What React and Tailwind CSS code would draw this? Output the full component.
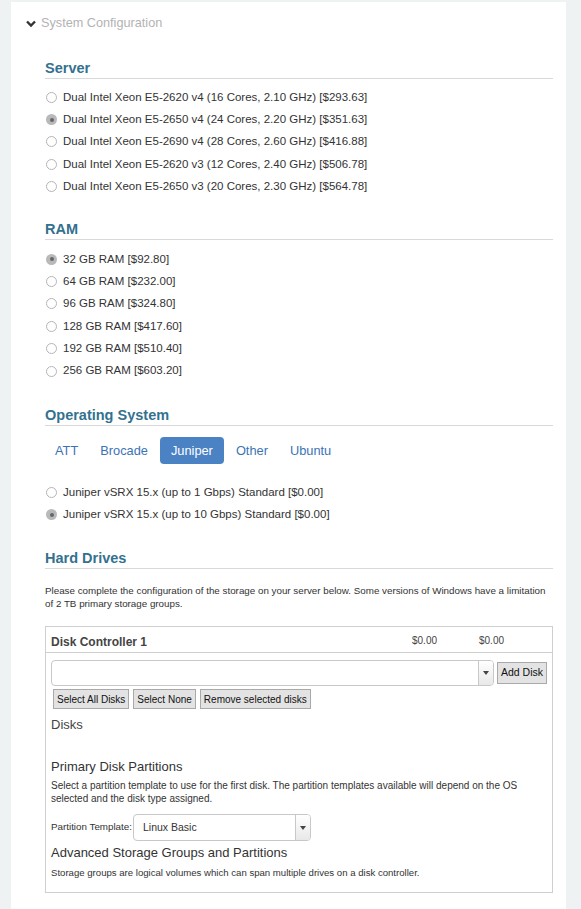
import { useState } from "react";

const servers = [
  "Dual Intel Xeon E5-2620 v4 (16 Cores, 2.10 GHz) [$293.63]",
  "Dual Intel Xeon E5-2650 v4 (24 Cores, 2.20 GHz) [$351.63]",
  "Dual Intel Xeon E5-2690 v4 (28 Cores, 2.60 GHz) [$416.88]",
  "Dual Intel Xeon E5-2620 v3 (12 Cores, 2.40 GHz) [$506.78]",
  "Dual Intel Xeon E5-2650 v3 (20 Cores, 2.30 GHz) [$564.78]",
];

const rams = [
  "32 GB RAM [$92.80]",
  "64 GB RAM [$232.00]",
  "96 GB RAM [$324.80]",
  "128 GB RAM [$417.60]",
  "192 GB RAM [$510.40]",
  "256 GB RAM [$603.20]",
];

const osTabs = ["ATT", "Brocade", "Juniper", "Other", "Ubuntu"];

const osOptions = [
  "Juniper vSRX 15.x (up to 1 Gbps) Standard [$0.00]",
  "Juniper vSRX 15.x (up to 10 Gbps) Standard [$0.00]",
];

export default function App() {
  const [server, setServer] = useState(1);
  const [ram, setRam] = useState(0);
  const [tab, setTab] = useState("Juniper");
  const [os, setOs] = useState(1);

  return (
    <div className="min-h-[909px] bg-[#eef2f3] pt-[2px] pl-[11px] pr-[15px] font-['Liberation_Sans',Arial,sans-serif] text-[#333]">
      <div className="min-h-[907px] bg-white pb-4">
        <div className="flex items-center h-[42px] pl-[15px] pt-[1px] text-[12.7px] text-[#b3b3b3]">
          <Chevron />
          <span className="ml-[5px]">System Configuration</span>
        </div>

        <div className="pl-[34px] pr-[13px]">
          <SectionTitle className="mt-[15px]">Server</SectionTitle>
          <div className="pt-[7px]">
            {servers.map((s, i) => (
              <RadioRow key={s} label={s} checked={server == i} onClick={() => setServer(i)} />
            ))}
          </div>

          <SectionTitle className="mt-[22px]">RAM</SectionTitle>
          <div className="pt-[8px]">
            {rams.map((r, i) => (
              <RadioRow key={r} label={r} checked={ram == i} onClick={() => setRam(i)} />
            ))}
          </div>

          <SectionTitle className="mt-[24px]">Operating System</SectionTitle>
          <div className="flex items-center gap-[2px] mt-[11px]">
            {osTabs.map((t) => (
              <button
                key={t}
                onClick={() => setTab(t)}
                className={
                  t == tab
                    ? "h-[27px] px-[11px] rounded-[4px] bg-[#4a82c4] text-white text-[12.8px]"
                    : "h-[27px] px-[10px] rounded-[4px] text-[#3a74b6] text-[12.8px]"
                }
              >
                {t}
              </button>
            ))}
          </div>
          <div className="pt-[17px]">
            {osOptions.map((o, i) => (
              <RadioRow key={o} label={o} checked={os == i} onClick={() => setOs(i)} />
            ))}
          </div>

          <SectionTitle className="mt-[23px]">Hard Drives</SectionTitle>
          <p className="text-[9.8px] leading-[13px] mt-[15px] text-[#333]">
            Please complete the configuration of the storage on your server below. Some versions of Windows have a
            limitation of 2 TB primary storage groups.
          </p>

          <div className="mt-[16px] border border-[#cfcfcf]">
            <div className="flex items-start h-[26px] border-b border-[#cfcfcf] pl-[5px] pt-[6px]">
              <span className="font-bold text-[12px] text-[#444] flex-1">Disk Controller 1</span>
              <span className="text-[10px] text-[#444] w-[67px]">$0.00</span>
              <span className="text-[10px] text-[#444] w-[73px]">$0.00</span>
            </div>
            <div className="px-[5px] pt-[7px]">
              <div className="flex items-center gap-[3px]">
                <div className="flex flex-1 h-[26px] border border-[#c8c8c8] rounded-[4px] overflow-hidden">
                  <div className="flex-1" />
                  <div className="w-[15px] border-l border-[#c8c8c8] bg-gradient-to-b from-white to-[#e8e8e8] flex items-center justify-center">
                    <Caret />
                  </div>
                </div>
                <GrayButton className="h-[22px] px-[3px] text-[10.5px]">Add Disk</GrayButton>
              </div>
              <div className="flex gap-[4px] mt-[3px] pl-[2px]">
                <GrayButton>Select All Disks</GrayButton>
                <GrayButton>Select None</GrayButton>
                <GrayButton>Remove selected disks</GrayButton>
              </div>
              <div className="text-[13px] text-[#444] mt-[6px]">Disks</div>

              <div className="text-[13px] text-[#333] mt-[22px]">Primary Disk Partitions</div>
              <p className="text-[10px] leading-[13px] mt-[3px] text-[#333]">
                Select a partition template to use for the first disk. The partition templates available will depend on
                the OS selected and the disk type assigned.
              </p>
              <div className="flex items-center mt-[9px]">
                <span className="text-[9.8px] text-[#333] mr-[1px]">Partition Template:</span>
                <div className="flex w-[178px] h-[27px] border border-[#c8c8c8] rounded-[4px] overflow-hidden">
                  <div className="flex-1 flex items-center pl-[9px] text-[10.5px] text-[#333]">Linux Basic</div>
                  <div className="w-[15px] border-l border-[#c8c8c8] bg-gradient-to-b from-white to-[#e8e8e8] flex items-center justify-center">
                    <Caret />
                  </div>
                </div>
              </div>
              <div className="text-[13px] text-[#333] mt-[2px]">Advanced Storage Groups and Partitions</div>
              <p className="text-[9.6px] leading-[13px] mt-[3px] pb-[13px] text-[#333]">
                Storage groups are logical volumes which can span multiple drives on a disk controller.
              </p>
            </div>
          </div>
        </div>
      </div>
    </div>
  );
}

const SectionTitle = ({ children, className }) => {
  return (
    <div className={"border-b border-[#d9d9d9] pb-[1px] " + className}>
      <h2 className="text-[14.5px] font-bold text-[#33718f] leading-[18px]">{children}</h2>
    </div>
  );
};

const RadioRow = ({ label, checked, onClick }) => {
  return (
    <div className="flex items-center h-[22.4px] pl-[1px] cursor-pointer" onClick={onClick}>
      <span
        className={
          checked
            ? "w-[11px] h-[11px] rounded-full bg-[#b9b9b9] flex items-center justify-center"
            : "w-[11px] h-[11px] rounded-full border border-[#b5b5b5] bg-white"
        }
      >
        {checked && <span className="w-[4px] h-[4px] rounded-full bg-[#666]" />}
      </span>
      <span className="ml-[6px] text-[11.5px] text-[#333]">{label}</span>
    </div>
  );
};

const GrayButton = ({ children, className }) => {
  return (
    <button
      className={
        "border border-[#a9a9a9] bg-[#e3e3e3] text-[#111] " + (className || "h-[20px] px-[3px] text-[10px]")
      }
    >
      {children}
    </button>
  );
};

const Caret = () => (
  <svg width="6" height="4" viewBox="0 0 6 4">
    <path d="M0 0 L6 0 L3 4 Z" fill="#444" />
  </svg>
);

const Chevron = () => (
  <svg width="10" height="8" viewBox="0 0 10 8">
    <path d="M1 1.5 L5 5.5 L9 1.5" stroke="#333" strokeWidth="2.4" fill="none" />
  </svg>
);
